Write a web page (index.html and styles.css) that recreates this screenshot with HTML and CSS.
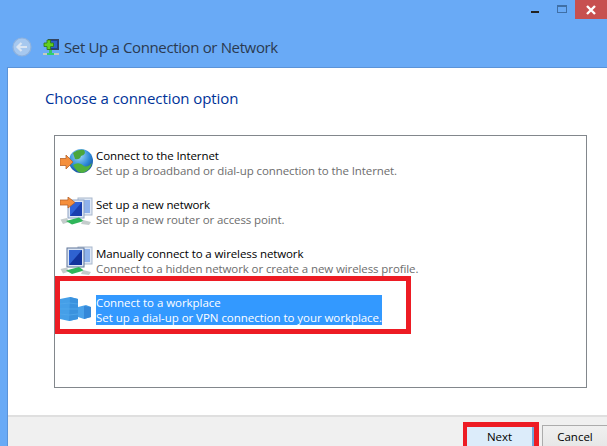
FILE: index.html
```html
<!DOCTYPE html>
<html lang="en">
<head>
<meta charset="utf-8">
<title>Set Up a Connection or Network</title>
<link rel="stylesheet" href="styles.css">
</head>
<body>
<div class="window">
  <div class="controls">
    <span class="min"></span>
    <span class="max"></span>
    <span class="close">
      <svg width="12" height="12" viewBox="0 0 12 12"><path d="M2 2 L10 10 M10 2 L2 10" stroke="#fff" stroke-width="2.4" fill="none"/></svg>
    </span>
  </div>
  <div class="nav">
    <svg class="back" width="20" height="20" viewBox="0 0 20 20">
      <circle cx="10" cy="10" r="9" fill="#a6c8ef" stroke="#90b2dc" stroke-width="1.2"/>
      <path d="M15 10 H6 M9.5 6 L5.5 10 L9.5 14" stroke="#dbe6f3" stroke-width="2.2" fill="none"/>
    </svg>
    <svg class="nav-icon" width="16" height="17" viewBox="0 0 16 17">
      <rect x="5.5" y="0.5" width="10" height="10" fill="#1c3f8f" stroke="#33425f"/>
      <rect x="7" y="2" width="7" height="7" fill="#2f62c8"/>
      <rect x="6" y="11" width="3" height="3" fill="#35c46a"/>
      <rect x="0" y="14" width="16" height="2" fill="#c3cdbf"/>
      <rect x="4" y="14" width="7" height="2" fill="#2fcf6e"/>
      <path d="M4 1 H7.5 V4 H10.5 V7.5 H7.5 V10.5 H4 V7.5 H1 V4 H4 Z" fill="#63cf22" stroke="#2c7a10" stroke-width="0.8"/>
    </svg>
    <h1 class="title">Set Up a Connection or Network</h1>
  </div>
  <div class="main">
    <div class="content">
      <h2 class="heading">Choose a connection option</h2>
      <div class="list">
        <div class="row">
          <svg class="icon" width="34" height="30" viewBox="0 0 34 30">
            <defs>
              <radialGradient id="sea" cx="0.42" cy="0.28" r="0.8"><stop offset="0" stop-color="#a5dcf8"/><stop offset="0.55" stop-color="#2f8ad8"/><stop offset="1" stop-color="#0f3f8e"/></radialGradient>
            </defs>
            <circle cx="21" cy="13" r="12" fill="url(#sea)"/>
            <path d="M13 5 Q18 1 24 2 Q27 6 21 8 Q20 12 15 11 Z" fill="#4aa63c"/>
            <path d="M13 17 Q19 13 24 18 Q27 20 32 15 Q30 23 22 25 Q16 24 13 17 Z" fill="#4fb03e"/>
            <path d="M0 10.5 H6 V7 L13 14 L6 21 V17.5 H0 Z" fill="#f58f3c" stroke="#b8622a" stroke-width="0.8"/>
          </svg>
          <div class="text">
            <div class="name">Connect to the Internet</div>
            <div class="desc">Set up a broadband or dial-up connection to the Internet.</div>
          </div>
        </div>
        <div class="row">
          <svg class="icon" width="34" height="30" viewBox="0 0 34 30">
            <rect x="18" y="1" width="14" height="17" fill="#dfe8f5" stroke="#a9b8cc"/>
            <rect x="20" y="3" width="10" height="13" fill="#8fb2ec"/>
            <rect x="8" y="3" width="16" height="18" fill="#dce6f5" stroke="#8fa4c4"/>
            <rect x="10" y="5" width="12" height="14" fill="#2f62d8"/>
            <path d="M10 19 L22 5 V19 Z" fill="#1a3fae"/>
            <path d="M0.5 22.5 L7 21 L9 25 L3 27 Z" fill="#c4cccc"/>
            <path d="M6 24 L19 20.5 L24 24 L12 27.5 Z" fill="#2fb65a"/>
            <path d="M23 23 L31 25 L29 28 L21 27 Z" fill="#c4cccc"/>
            <path d="M0 3 H8 V0 L15 5.5 L8 11 V8 H0 Z" fill="#f58f3c" stroke="#b8622a" stroke-width="0.8"/>
          </svg>
          <div class="text">
            <div class="name">Set up a new network</div>
            <div class="desc">Set up a new router or access point.</div>
          </div>
        </div>
        <div class="row">
          <svg class="icon" width="34" height="30" viewBox="0 0 34 30">
            <rect x="18" y="1" width="14" height="17" fill="#dfe8f5" stroke="#a9b8cc"/>
            <rect x="20" y="3" width="10" height="13" fill="#8fb2ec"/>
            <rect x="7" y="2" width="17" height="19" fill="#dce6f5" stroke="#5f7498"/>
            <rect x="9" y="4" width="13" height="15" fill="#12339c"/>
            <path d="M9 4 H22 L9 19 Z" fill="#2f62d0"/>
            <path d="M0.5 23 L7 21.5 L9 25.5 L3 27.5 Z" fill="#c4cccc"/>
            <path d="M6 24.5 L19 21 L24 24.5 L12 28 Z" fill="#2fb65a"/>
            <path d="M23 24 L31 26 L29 29 L21 28 Z" fill="#c4cccc"/>
          </svg>
          <div class="text">
            <div class="name">Manually connect to a wireless network</div>
            <div class="desc">Connect to a hidden network or create a new wireless profile.</div>
          </div>
        </div>
        <div class="row selected">
          <svg class="icon" width="34" height="30" viewBox="0 0 34 30">
            <path d="M0 4 L10 2 L18 4 V24 L9 26 L0 24 Z" fill="#459fe8"/>
            <path d="M10 2 L18 4 V24 L9 26 Z" fill="#3a92de"/>
            <path d="M0 9 L9 8 L18 9 M0 14 H18 M0 19 L9 20 L18 19" stroke="#52a8ec" stroke-width="0.8" fill="none"/>
            <path d="M18 12 L26 10 L31 12 V22 L24 24 L18 22 Z" fill="#4aa2ea"/>
            <path d="M24 11 L31 12 V22 L24 24 Z" fill="#3588d8"/>
          </svg>
          <div class="text picked">
            <div class="name">Connect to a workplace</div>
            <div class="desc">Set up a dial-up or VPN connection to your workplace.</div>
          </div>
          <div class="mark"></div>
        </div>
      </div>
    </div>
    <div class="footer">
      <div class="next-mark"><button class="btn next" type="button">Next</button></div>
      <button class="btn cancel" type="button">Cancel</button>
    </div>
  </div>
</div>
</body>
</html>
```

FILE: styles.css
```css
* { box-sizing: border-box; }
html, body { margin: 0; padding: 0; }
body { font-family: "Open Sans", "Noto Sans", sans-serif; background: #69aaf6; }

.window {
  width: 607px;
  height: 446px;
  display: flex;
  flex-direction: column;
  background: #69aaf6;
  overflow: hidden;
}

.controls {
  height: 19px;
  display: flex;
  justify-content: flex-end;
  align-items: flex-start;
  flex: none;
}
.min { width: 8px; height: 2px; margin: 11px 18px 0 0; background: #222; }
.max { width: 10px; height: 8px; margin: 5px 8px 0 0; border: 1px solid #3f6fa6; border-top-width: 2px; }
.close {
  width: 32px;
  height: 19px;
  background: #c75050;
  display: flex;
  align-items: center;
  justify-content: center;
}

.nav {
  height: 48px;
  flex: none;
  display: flex;
  align-items: center;
  padding: 8px 0 0 12px;
}
.back { margin-right: 11px; }
.nav-icon { margin-right: 5px; }
.title {
  margin: 0;
  font-size: 15px;
  line-height: 20px;
  font-weight: 400;
  letter-spacing: -0.36px;
  color: #2b3a50;
}

.main {
  flex: 1;
  min-height: 0;
  margin-left: 7px;
  background: #fff;
  border-top: 1px solid #5b93d8;
  border-left: 1px solid #5b93d8;
  display: flex;
  flex-direction: column;
}
.content { flex: 1; min-height: 0; padding: 20px 0 0 37px; }
.heading {
  margin: 0 0 26px;
  font-size: 15px;
  line-height: 21px;
  font-weight: 400;
  letter-spacing: -0.08px;
  color: #003399;
}

.list {
  width: 533px;
  height: 253px;
  margin-left: 9px;
  padding: 12px 0 0 5px;
  border: 1px solid #82878c;
  display: flex;
  flex-direction: column;
  gap: 19px;
}
.row { position: relative; display: flex; gap: 2px; height: 30px; align-items: flex-start; }
.icon { flex: none; }
.text { font-size: 11.5px; line-height: 15px; white-space: nowrap; letter-spacing: -0.1px; }
.name { color: #000; }
.desc { color: #6d6d6d; }
.picked { background: #3399ff; letter-spacing: -0.04px; }
.picked .name, .picked .desc { color: #fff; }
.mark {
  position: absolute;
  left: -5px;
  top: -19px;
  width: 356px;
  height: 58px;
  border: 5px solid #ed1c24;
  pointer-events: none;
}

.footer {
  height: 31px;
  flex: none;
  background: #f0f0f0;
  border-top: 2px solid #dfdfdf;
  display: flex;
  justify-content: flex-end;
  align-items: flex-start;
  gap: 3px;
  margin-right: -1px;
  overflow: hidden;
}
.next-mark {
  width: 76px;
  height: 29px;
  margin-top: 5px;
  border: 5px solid #ed1c24;
  border-left-width: 4px;
  flex: none;
}
.btn {
  font-family: inherit;
  font-size: 11.5px;
  line-height: 15px;
  color: #000;
  padding: 0;
}
.next {
  display: block;
  width: 100%;
  height: 19px;
  background: #dcecfa;
  border: 0;
  border-right: 2px solid #6fa8dc;
}
.cancel {
  width: 66px;
  height: 26px;
  margin-top: 8px;
  padding-bottom: 3px;
  flex: none;
  background: linear-gradient(#f0f0f0, #e5e5e5);
  border: 1px solid #acacac;
}
```
